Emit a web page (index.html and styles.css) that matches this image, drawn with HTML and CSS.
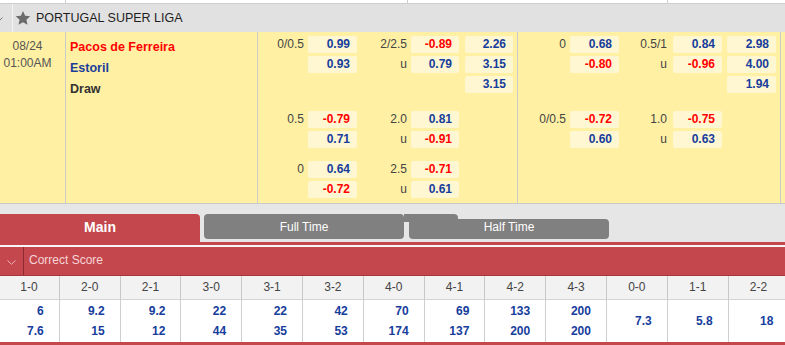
FILE: index.html
```html
<!DOCTYPE html>
<html>
<head>
<meta charset="utf-8">
<link rel="stylesheet" href="styles.css">
</head>
<body>
<div class="top-strip"><div class="ts1"></div><div class="ts2"></div><div class="ts3"></div></div>
<div class="league">
  <div class="toggle"><svg class="chev" width="8" height="5" viewBox="0 0 8 5"><path d="M0.5 0.5 L4 4 L7.5 0.5" fill="none" stroke="#777" stroke-width="1"/></svg></div>
  <svg class="star" width="16" height="16" viewBox="0 0 24 24"><path d="M12 1.5l3.2 7.1 7.7.8-5.8 5.2 1.7 7.6L12 18.3l-6.8 3.9 1.7-7.6-5.8-5.2 7.7-.8z" fill="#6b6b6b"/></svg>
  <span class="league-name">PORTUGAL SUPER LIGA</span>
</div>
<div class="match">
  <div class="date"><div>08/24</div><div>01:00AM</div></div>
  <div class="teams">
    <div class="home">Pacos de Ferreira</div>
    <div class="away">Estoril</div>
    <div class="draw">Draw</div>
  </div>
  <div class="odds odds-l">
    <div class="grp g1">
      <div class="row"><span class="lb">0/0.5</span><span class="c b">0.99</span><span class="lb">2/2.5</span><span class="c r">-0.89</span><span class="c b e">2.26</span></div>
      <div class="row"><span class="lb"></span><span class="c b">0.93</span><span class="lb">u</span><span class="c b">0.79</span><span class="c b e">3.15</span></div>
      <div class="row"><span class="lb"></span><span></span><span class="lb"></span><span></span><span class="c b e">3.15</span></div>
    </div>
    <div class="grp g2">
      <div class="row"><span class="lb">0.5</span><span class="c r">-0.79</span><span class="lb">2.0</span><span class="c b">0.81</span><span></span></div>
      <div class="row"><span class="lb"></span><span class="c b">0.71</span><span class="lb">u</span><span class="c r">-0.91</span><span></span></div>
    </div>
    <div class="grp g3">
      <div class="row"><span class="lb">0</span><span class="c b">0.64</span><span class="lb">2.5</span><span class="c r">-0.71</span><span></span></div>
      <div class="row"><span class="lb"></span><span class="c r">-0.72</span><span class="lb">u</span><span class="c b">0.61</span><span></span></div>
    </div>
  </div>
  <div class="odds odds-r">
    <div class="grp g1">
      <div class="row"><span class="lb">0</span><span class="c b">0.68</span><span class="lb">0.5/1</span><span class="c b">0.84</span><span class="c b e">2.98</span></div>
      <div class="row"><span class="lb"></span><span class="c r">-0.80</span><span class="lb">u</span><span class="c r">-0.96</span><span class="c b e">4.00</span></div>
      <div class="row"><span class="lb"></span><span></span><span class="lb"></span><span></span><span class="c b e">1.94</span></div>
    </div>
    <div class="grp g2">
      <div class="row"><span class="lb">0/0.5</span><span class="c r">-0.72</span><span class="lb">1.0</span><span class="c r">-0.75</span><span></span></div>
      <div class="row"><span class="lb"></span><span class="c b">0.60</span><span class="lb">u</span><span class="c b">0.63</span><span></span></div>
    </div>
  </div>
  <div class="fill"></div>
</div>
<div class="tabs">
  <div class="tab main">Main</div>
  <div class="tab full">Full Time</div>
  <div class="hump"></div>
  <div class="tab half">Half Time</div>
</div>
<div class="redline"></div>
<div class="whitegap"></div>
<div class="cs-head">
  <div class="cs-toggle"><svg width="9" height="5" viewBox="0 0 9 5"><path d="M0.5 0.5 L4.5 4.2 L8.5 0.5" fill="none" stroke="#e9b3b6" stroke-width="1"/></svg></div>
  <div class="cs-title">Correct Score</div>
</div>
<div class="scores">
  <div class="sh">1-0</div><div class="sh">2-0</div><div class="sh">2-1</div><div class="sh">3-0</div><div class="sh">3-1</div><div class="sh">3-2</div><div class="sh">4-0</div><div class="sh">4-1</div><div class="sh">4-2</div><div class="sh">4-3</div><div class="sh">0-0</div><div class="sh">1-1</div><div class="sh">2-2</div>
  <div class="sv"><div>6</div><div>7.6</div></div>
  <div class="sv"><div>9.2</div><div>15</div></div>
  <div class="sv"><div>9.2</div><div>12</div></div>
  <div class="sv"><div>22</div><div>44</div></div>
  <div class="sv"><div>22</div><div>35</div></div>
  <div class="sv"><div>42</div><div>53</div></div>
  <div class="sv"><div>70</div><div>174</div></div>
  <div class="sv"><div>69</div><div>137</div></div>
  <div class="sv"><div>133</div><div>200</div></div>
  <div class="sv"><div>200</div><div>200</div></div>
  <div class="sv"><div>7.3</div></div>
  <div class="sv"><div>5.8</div></div>
  <div class="sv"><div>18</div></div>
</div>
<div class="bottom-red"></div>
</body>
</html>
```
FILE: styles.css
```css
* { box-sizing: border-box; }
html, body { margin: 0; padding: 0; }
body {
  width: 785px;
  height: 345px;
  overflow: hidden;
  background: #ffffff;
  font-family: "Liberation Sans", Arial, sans-serif;
  font-size: 12px;
  color: #333;
}
.top-strip {
  display: flex;
  height: 4px;
  border-bottom: 1px solid #cfcfcf;
}
.top-strip div { height: 3px; }
.ts1 { width: 66px; border-right: 1px solid #cfcfcf; }
.ts2 { width: 342px; border-right: 1px solid #cfcfcf; }
.ts3 { width: 260px; border-right: 1px solid #cfcfcf; }

.league {
  display: flex;
  align-items: center;
  height: 28px;
  background: #e1e1e1;
}
.toggle {
  width: 13px;
  height: 100%;
  border-right: 1px solid #f4f4f4;
  display: flex;
  align-items: center;
  overflow: hidden;
}
.chev { margin-left: -5px; margin-top: 2px; }
.star { margin-left: 2px; }
.league-name {
  margin-left: 5px;
  font-size: 12.5px;
  color: #1e1e1e;
}

.match {
  display: flex;
  height: 172px;
  background: #fff0a4;
  border-bottom: 1px solid #c9c9c9;
}
.date {
  width: 66px;
  border-right: 1px solid #cbcbcb;
  padding-top: 6px;
  padding-right: 10px;
  text-align: center;
  line-height: 17px;
  color: #555;
}
.teams {
  width: 192px;
  border-right: 1px solid #cbcbcb;
  padding-left: 4px;
  padding-top: 5px;
  line-height: 21px;
  font-weight: bold;
  font-size: 12.5px;
}
.home { color: #ff0000; }
.away { color: #1a3d9c; }
.draw { color: #333; }

.odds {
  display: flex;
  flex-direction: column;
  border-right: 1px solid #cbcbcb;
}
.odds-l { width: 260px; }
.odds-r { width: 263px; }
.fill { flex: 1; }
.grp { display: flex; flex-direction: column; gap: 3px; }
.g1 { margin-top: 4px; }
.g2 { margin-top: 18px; }
.g3 { margin-top: 13px; }
.row {
  display: grid;
  height: 17px;
  line-height: 17px;
}
.odds-l .row { grid-template-columns: 50px 49px 54px 48px 54px; }
.odds-r .row { grid-template-columns: 52px 49px 54px 49px 54px; }
.lb {
  text-align: right;
  padding-right: 4px;
  color: #444;
}
.odds-r .lb:nth-child(3) { padding-right: 6px; }
.c {
  background: #fff7d1;
  border-radius: 2px;
  text-align: right;
  padding-right: 7px;
  font-weight: bold;
}
.c.e { width: 48px; justify-self: end; }
.odds-r .c.e { width: 49px; }
.b { color: #163d9c; }
.r { color: #ff0000; }

.tabs {
  position: relative;
  display: flex;
  align-items: flex-end;
  height: 38px;
  background: #e6e6e6;
}
.tab {
  color: #fff;
  text-align: center;
  width: 200px;
}
.main {
  height: 28px;
  line-height: 26px;
  background: #c4474e;
  border-radius: 0 4px 0 0;
  font-weight: bold;
  font-size: 14px;
}
.full {
  margin-left: 4px;
  height: 25px;
  line-height: 26px;
  margin-bottom: 3px;
  background: #808080;
  border-radius: 4px;
}
.hump {
  position: absolute;
  left: 404px;
  top: 10px;
  width: 54px;
  height: 8px;
  background: #808080;
  border-radius: 0 4px 0 0;
}
.half {
  position: relative;
  margin-left: 5px;
  height: 20px;
  line-height: 17px;
  margin-bottom: 3px;
  background: #808080;
  border-radius: 4px;
}
.redline { height: 3px; background: #c4474e; }
.whitegap { height: 2px; background: #f6f6f6; }
.cs-head {
  display: flex;
  height: 29px;
  background: #c4474e;
  border-bottom: 1px solid #a8353c;
}
.cs-toggle {
  width: 24px;
  border-right: 1px solid #8e2a30;
  display: flex;
  align-items: center;
  justify-content: center;
  padding-top: 2px;
}
.cs-title {
  padding-left: 5px;
  line-height: 27px;
  color: #f6d6d7;
  font-size: 12px;
}
.scores {
  display: grid;
  grid-template-columns: repeat(13, 60.8px);
  margin-left: -1px;
  width: 800px;
}
.sh {
  height: 24px;
  line-height: 23px;
  text-align: center;
  background: #f2f2f2;
  color: #444;
  border-right: 1px solid #c8c8c8;
  border-bottom: 1px solid #d4d4d4;
}
.sv {
  height: 42px;
  display: flex;
  flex-direction: column;
  justify-content: center;
  text-align: right;
  padding-right: 15px;
  line-height: 20px;
  font-weight: bold;
  color: #163d9c;
  border-right: 1px solid #cfcfcf;
  background: #fff;
}
.bottom-red { height: 6px; background: #c4474e; }
```
